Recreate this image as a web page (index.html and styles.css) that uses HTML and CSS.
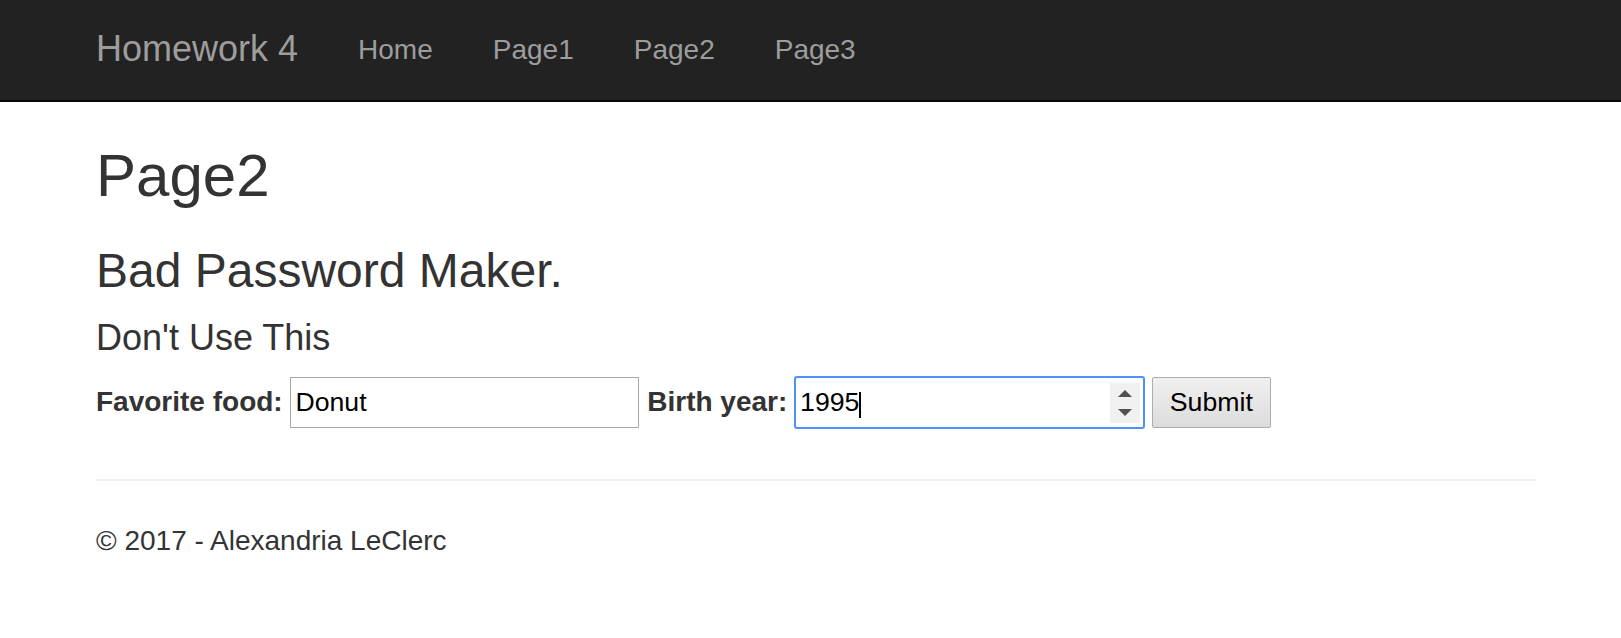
FILE: index.html
```html
<!DOCTYPE html>
<html lang="en">
<head>
<meta charset="utf-8">
<title>Page2 - Homework 4</title>
<link rel="stylesheet" href="styles.css">
</head>
<body>
<header class="navbar">
  <div class="navbar-inner">
    <a class="brand" href="#">Homework 4</a>
    <ul class="nav">
      <li><a href="#">Home</a></li>
      <li><a href="#">Page1</a></li>
      <li><a href="#">Page2</a></li>
      <li><a href="#">Page3</a></li>
    </ul>
  </div>
</header>
<main class="container">
  <h2 class="title">Page2</h2>
  <h3 class="subtitle">Bad Password Maker.</h3>
  <h4 class="note">Don't Use This</h4>
  <form class="pw-form">
    <label class="lbl" for="food">Favorite food:</label> <input class="field" id="food" type="text" value="Donut"> <label class="lbl" for="year">Birth year:</label> <span class="num-wrap"><input class="field field-focus" id="year" type="number" value="1995"><span class="caret"></span><span class="spin"><svg width="30" height="40" viewBox="0 0 30 40"><rect width="30" height="40" fill="#f0f0f0"/><path d="M15 7 L22 14 L8 14 Z" fill="#505050"/><path d="M8 26 L22 26 L15 33 Z" fill="#505050"/></svg></span></span> <button class="btn" type="button">Submit</button>
  </form>
  <hr class="rule">
  <footer class="foot">
    <p class="copy">© 2017 - Alexandria LeClerc</p>
  </footer>
</main>
</body>
</html>
```
FILE: styles.css
```css
* { box-sizing: border-box; }
html, body { margin: 0; padding: 0; }
body {
  font-family: "Liberation Sans", Arial, sans-serif;
  font-size: 28px;
  line-height: 40px;
  color: #333;
  background: #fff;
}
.navbar {
  background: #222;
  border-bottom: 2px solid #080808;
  height: 102px;
}
.navbar-inner {
  display: flex;
  padding-left: 96px;
}
.brand {
  font-size: 36px;
  line-height: 40px;
  padding: 29px 30px 30px 0;
  color: #9d9d9d;
  text-decoration: none;
}
.nav {
  display: flex;
  list-style: none;
  margin: 0;
  padding: 0;
}
.nav a {
  display: block;
  padding: 30px;
  font-size: 28px;
  line-height: 40px;
  color: #9d9d9d;
  text-decoration: none;
}
.container {
  padding: 0 85px 0 96px;
}
.title {
  font-size: 60px;
  line-height: 66px;
  font-weight: 500;
  margin: 41px 0 20px;
}
.subtitle {
  font-size: 48px;
  line-height: 52.8px;
  font-weight: 500;
  margin: 36px 0 20px;
}
.note {
  font-size: 36px;
  line-height: 39.6px;
  font-weight: 500;
  margin: 20px 0 20px;
}
.pw-form {
  margin: 0;
}
.lbl {
  display: inline-block;
  font-weight: bold;
  margin-bottom: 10px;
}
.field {
  font-family: "Liberation Sans", Arial, sans-serif;
  font-size: 26.67px;
  color: #000;
  width: 349px;
  height: 51px;
  padding: 1px 4px;
  margin: 0;
  border: 1px solid #a9a9a9;
  background: #fff;
  outline: none;
  border-radius: 0;
  -moz-appearance: textfield;
  appearance: textfield;
  caret-color: transparent;
}
.field::-webkit-inner-spin-button,
.field::-webkit-outer-spin-button {
  -webkit-appearance: none;
  margin: 0;
}
.field-focus {
  border-color: #4d90fe;
  box-shadow: 0 0 0 1px #4d90fe;
  border-radius: 2px;
}
.num-wrap {
  position: relative;
  display: inline-block;
}
.caret {
  position: absolute;
  left: 64px;
  top: 15px;
  width: 2px;
  height: 26px;
  background: #000;
}
.spin {
  position: absolute;
  left: 315px;
  top: 6px;
  width: 30px;
  height: 40px;
  line-height: 0;
}
.btn {
  font-family: "Liberation Sans", Arial, sans-serif;
  font-size: 26.67px;
  color: #000;
  height: 51px;
  padding: 0 17px;
  margin: 0;
  border: 1px solid #adadad;
  border-radius: 2px;
  background: linear-gradient(#f0f0f0, #dcdcdc);
}
.rule {
  border: 0;
  border-top: 2px solid #eee;
  margin: 47px 0 40px;
  height: 0;
}
.foot { margin: 0; }
.copy {
  margin: 0 0 20px;
}
```
